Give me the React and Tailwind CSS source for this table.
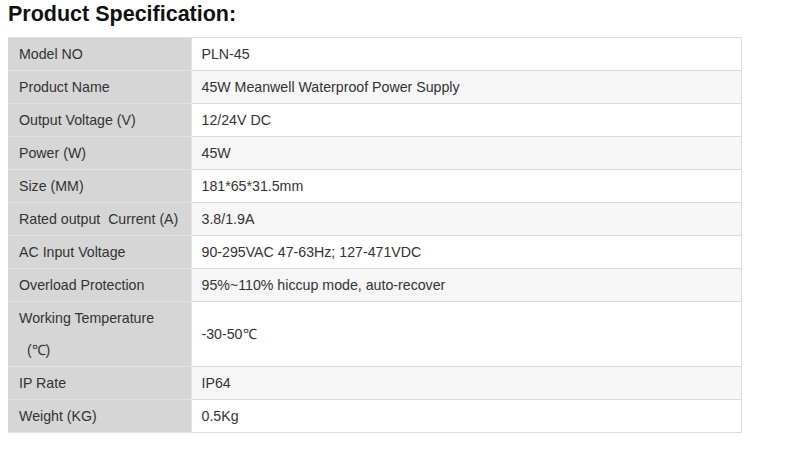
import React from "react";

const rows = [
  ["Model NO", "PLN-45"],
  ["Product Name", "45W Meanwell Waterproof Power Supply"],
  ["Output Voltage (V)", "12/24V DC"],
  ["Power (W)", "45W"],
  ["Size (MM)", "181*65*31.5mm"],
  ["Rated output\u00a0 Current (A)", "3.8/1.9A"],
  ["AC Input Voltage", "90-295VAC 47-63Hz; 127-471VDC"],
  ["Overload Protection", "95%~110% hiccup mode, auto-recover"],
  [
    <>
      Working Temperature
      <br />
      {"\u00a0\u00a0(\u2103)"}
    </>,
    "-30-50\u2103",
  ],
  ["IP Rate", "IP64"],
  ["Weight (KG)", "0.5Kg"],
];

function App() {
  return (
    <div className="w-[790px] h-[450px] bg-white px-2 font-['Liberation_Sans',Arial,sans-serif] text-[#333]">
      <h2 className="text-[21.5px] font-bold text-[#111] leading-[28px] h-[37px]">Product Specification:</h2>
      <table className="border-collapse w-[734px] text-[14.2px]">
        <tbody>
          {rows.map(([label, value], i) => (
            <tr key={i} className={i % 2 === 1 ? "bg-[#f6f6f6]" : "bg-white"}>
              <td className="w-[183px] bg-[#d6d6d6] border border-[#e2e2e2] border-l-0 pl-[11px] pr-2 leading-[32px] align-middle">
                {label}
              </td>
              <td className="border border-[#dcdcdc] pl-[10px] leading-[32px] align-middle">{value}</td>
            </tr>
          ))}
        </tbody>
      </table>
    </div>
  );
}

export default App;
